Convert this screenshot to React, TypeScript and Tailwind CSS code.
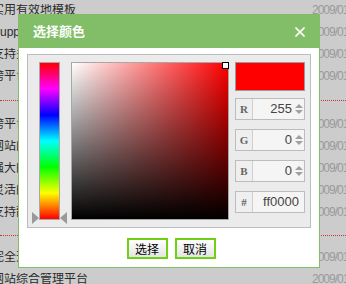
import React from "react";

const sec1 = ["实用有效地模板", "Support multi sites", "支持多语言版本", "跨平台运行系统"];
const sec2 = ["跨平台运行系统", "网站内容管理", "强大的模板引擎", "灵活的栏目设置", "支持静态生成"];
const sec3 = ["完全开源免费", "网站综合管理平台"];

function Row({ text }: { text: string }) {
  return (
    <div className="flex h-[22px] items-center whitespace-nowrap text-[12px] leading-none">
      <div className="w-[312px] shrink-0 overflow-hidden text-[#2b2b2b]">
        <div className="ml-[-8px]">{text}</div>
      </div>
      <div className="text-[12px] tracking-[-1px] text-[#9a9a9a]">2009/01/12</div>
    </div>
  );
}

function Spinner() {
  return (
    <div className="ml-[3px] mr-px flex w-[8px] flex-col items-center gap-[2px]">
      <div className="h-0 w-0 border-x-[4px] border-b-[4px] border-x-transparent border-b-[#a0a0a0]" />
      <div className="h-0 w-0 border-x-[4px] border-t-[4px] border-x-transparent border-t-[#a0a0a0]" />
    </div>
  );
}

function Field({ label, value, spin }: { label: string; value: string; spin: boolean }) {
  return (
    <div className="flex h-[22px] border border-[#bcbcbc] bg-[#f5f5f5]">
      <div className="flex w-[17px] items-center justify-center border-r border-[#cfcfcf] bg-[#efefef] font-['Liberation_Serif',serif] text-[11px] font-bold text-[#666]">
        {label}
      </div>
      <div
        className={
          spin
            ? "flex flex-1 items-center justify-end text-[13px] text-[#444]"
            : "flex flex-1 items-center justify-end pr-[5px] text-[13px] text-[#444]"
        }
      >
        <span>{value}</span>
        {spin && <Spinner />}
      </div>
    </div>
  );
}

export default function App() {
  return (
    <div className="relative h-[284px] w-[346px] overflow-hidden bg-[#cccccc] font-['Liberation_Sans','Noto_Sans_CJK_SC',sans-serif]">
      {/* background list */}
      <div className="mt-[-1px]">
        {sec1.map((t, i) => (
          <Row key={"a" + i} text={t} />
        ))}
        <div className="h-[13px]" />
        <div className="border-t border-dotted border-[#cc3333]" />
        <div className="h-[12px]" />
        {sec2.map((t, i) => (
          <Row key={"b" + i} text={t} />
        ))}
        <div className="h-[12px]" />
        <div className="border-t border-dotted border-[#cc3333]" />
        <div className="h-[10px]" />
        {sec3.map((t, i) => (
          <Row key={"c" + i} text={t} />
        ))}
      </div>

      {/* dialog */}
      <div className="absolute left-[18px] top-[14px] flex h-[254px] w-[302px] flex-col border border-t-0 border-[#82be67] bg-white">
        <div className="flex h-[34px] shrink-0 items-center justify-between bg-[#82be67] pl-[14px] pr-[14px]">
          <span className="font-['Noto_Sans_CJK_SC',sans-serif] text-[13px] font-bold text-white">选择颜色</span>
          <svg width="10" height="10" viewBox="0 0 10 10" className="mt-px">
            <path d="M0.5 0.5 L9.5 9.5 M9.5 0.5 L0.5 9.5" stroke="#fff" strokeWidth="1.6" />
          </svg>
        </div>

        <div className="ml-[8px] mt-[6px] flex h-[174px] w-[284px] border border-[#bdbdbd] bg-[#ebebeb] pl-[11px] pt-[7px]">
          {/* hue bar */}
          <div className="relative h-[158px] w-[21px] shrink-0">
            <div className="h-full w-full border border-[#a8a8a8] bg-[linear-gradient(to_bottom,#ff0000,#ff00ff,#0000ff,#00ffff,#00ff00,#ffff00,#ff0000)]" />
            <div className="absolute left-[-7px] top-[150px] h-0 w-0 border-y-[6px] border-l-[7px] border-y-transparent border-l-[#999]" />
            <div className="absolute left-[21px] top-[150px] h-0 w-0 border-y-[6px] border-r-[7px] border-y-transparent border-r-[#999]" />
          </div>

          {/* saturation / value */}
          <div className="relative ml-[11px] h-[158px] w-[158px] shrink-0 border border-[#a8a8a8] bg-[#ff0000]">
            <div className="h-full w-full bg-[linear-gradient(to_right,#ffffff,rgba(255,255,255,0))]">
              <div className="h-full w-full bg-[linear-gradient(to_bottom,rgba(0,0,0,0),#000000)]" />
            </div>
            <div className="absolute right-[-1px] top-[-1px] h-[7px] w-[7px] border border-black bg-white" />
          </div>

          {/* right column */}
          <div className="ml-[6px] flex w-[70px] shrink-0 flex-col">
            <div className="h-[29px] border border-[#9a9a9a] bg-[#ff0000]" />
            <div className="mt-[7px] flex flex-col gap-[9px]">
              <Field label="R" value="255" spin />
              <Field label="G" value="0" spin />
              <Field label="B" value="0" spin />
              <Field label="#" value="ff0000" spin={false} />
            </div>
          </div>
        </div>

        <div className="mt-[10px] flex justify-center gap-[7px] pl-[4px]">
          <button className="flex h-[21px] w-[41px] items-center justify-center border-2 border-[#6fd114] bg-[linear-gradient(to_bottom,#ffffff,#e4e4e4)] font-['Noto_Sans_CJK_SC',sans-serif] text-[12px] leading-none text-black">
            选择
          </button>
          <button className="flex h-[21px] w-[41px] items-center justify-center border-2 border-[#6fd114] bg-[linear-gradient(to_bottom,#ffffff,#e4e4e4)] font-['Noto_Sans_CJK_SC',sans-serif] text-[12px] leading-none text-black">
            取消
          </button>
        </div>
      </div>
    </div>
  );
}
